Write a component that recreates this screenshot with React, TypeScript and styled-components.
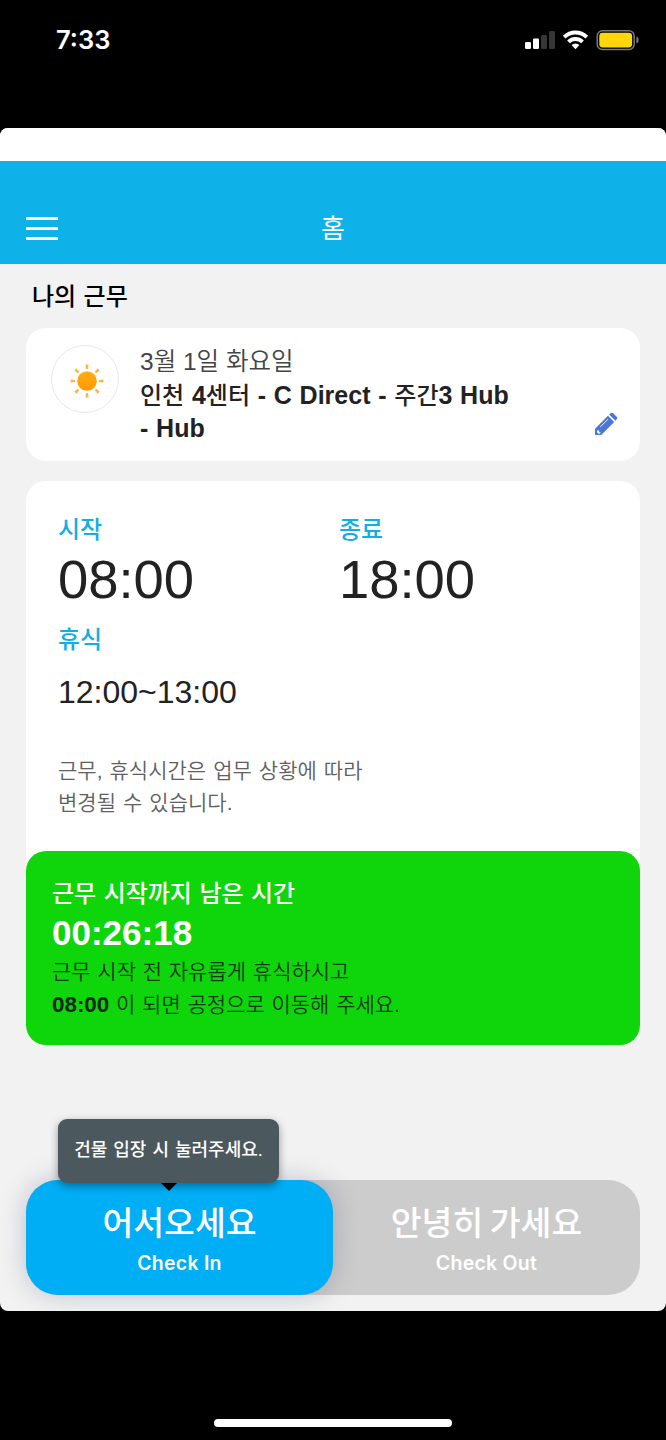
import React from 'react';
import styled, { createGlobalStyle } from 'styled-components';

const GlobalStyle = createGlobalStyle`
  * { box-sizing: border-box; }
  body { margin: 0; background: #000; }
`;

const Screen = styled.div`
  width: 666px;
  height: 1440px;
  background: #000;
  display: flex;
  flex-direction: column;
  font-family: 'Liberation Sans', 'Noto Sans CJK KR', sans-serif;
  color: #222;
  overflow: hidden;
  white-space: nowrap;
`;

const StatusBar = styled.div`
  height: 128px;
  flex: none;
  padding: 24px 27px 0 56px;
  display: flex;
  justify-content: space-between;
  align-items: flex-start;
`;

const Clock = styled.div`
  font: 600 25.5px/32px Inter, sans-serif;
  color: #fff;
`;

const StatusIcons = styled.svg`
  display: block;
`;

const Sheet = styled.main`
  height: 1183px;
  flex: none;
  background: #f2f2f2;
  border-radius: 8px;
  overflow: hidden;
  display: flex;
  flex-direction: column;
`;

const SheetTop = styled.div`
  height: 33px;
  flex: none;
  background: #fff;
`;

const Header = styled.header`
  height: 103px;
  flex: none;
  background: #0fb1e9;
  padding: 32px 26px 0;
  display: grid;
  grid-template-columns: 32px 1fr 32px;
  align-items: center;
`;

const MenuButton = styled.div`
  display: flex;
  flex-direction: column;
  gap: 7px;
  margin-top: -1px;
`;

const MenuBar = styled.span`
  height: 3px;
  background: #fff;
`;

const PageTitle = styled.h1`
  margin: 0;
  text-align: center;
  font-size: 26px;
  font-weight: 400;
  line-height: 36px;
  color: #fff;
`;

const SectionTitle = styled.h2`
  margin: 13px 0 15px 32px;
  font-size: 24px;
  font-weight: 500;
  line-height: 36px;
  color: #000;
  font-family: 'Noto Sans CJK KR', sans-serif;
  word-spacing: 2px;
`;

const ShiftCard = styled.section`
  height: 133px;
  margin: 0 26px;
  padding: 17px 22px 0 25px;
  background: #fff;
  border-radius: 20px;
  display: flex;
`;

const WeatherBadge = styled.div`
  width: 68px;
  height: 68px;
  border: 1.5px solid #e8e8e8;
  border-radius: 50%;
  display: flex;
  align-items: center;
  justify-content: center;
  padding: 3px 0 0 4px;
`;

const ShiftInfo = styled.div`
  flex: 1;
  margin-left: 21px;
  padding-top: 1px;
  line-height: 32.5px;
`;

const ShiftDate = styled.div`
  font-size: 24.5px;
  font-weight: 350;
  color: #444;
`;

const ShiftPlace = styled.div`
  font-size: 25px;
  font-weight: 700;
  word-spacing: 0.8px;
  color: #222;
`;

const Hangul = styled.span`
  font-size: 24px;
  font-weight: 500;
`;

const EditButton = styled.div`
  align-self: flex-end;
  margin-bottom: 25px;
  line-height: 0;
`;

const HoursCard = styled.section`
  height: 564px;
  margin: 20px 26px 0;
  background: #fff;
  border-radius: 20px;
  display: flex;
  flex-direction: column;
`;

const HoursBody = styled.div`
  height: 370px;
  padding: 31px 32px 0;
`;

const TimeGrid = styled.div`
  display: grid;
  grid-template-columns: 281px 1fr;
`;

const Label = styled.div`
  font-family: 'Noto Sans CJK KR', sans-serif;
  font-size: 24px;
  font-weight: 500;
  line-height: 32px;
  color: #12aee6;
`;

const BigTime = styled.div`
  font-size: 54.4px;
  line-height: 70px;
  margin: 1px 0 7px;
`;

const BreakTime = styled.div`
  font-size: 32px;
  line-height: 40px;
  margin-top: 18px;
`;

const Notice = styled.p`
  margin: 43px 0 0;
  font-size: 21px;
  font-weight: 350;
  line-height: 32px;
  word-spacing: 1.2px;
  color: #606060;
`;

const CountdownCard = styled.div`
  height: 194px;
  padding: 27px 26px 0;
  background: #0fd60b;
  border-radius: 20px;
`;

const CountdownTitle = styled.div`
  font-size: 24px;
  font-weight: 500;
  line-height: 32px;
  word-spacing: 0.8px;
  color: #fff;
`;

const Countdown = styled.div`
  font-size: 35px;
  font-weight: 700;
  line-height: 46px;
  color: #fff;
`;

const CountdownText = styled.p`
  margin: 0;
  font-size: 21px;
  font-weight: 350;
  line-height: 32.5px;
  word-spacing: 0.9px;
  color: #0b3a12;

  b { font-size: 22.4px; font-weight: 700; color: #0a260d; }
`;

const Actions = styled.div`
  position: relative;
  height: 115px;
  margin: 135px 26px 0;
  display: flex;
  background: #ccc;
  border-radius: 32px;
`;

const ActionButton = styled.div<{ $active?: boolean }>`
  flex: 1;
  padding-top: 19px;
  border-radius: 32px;
  text-align: center;
  color: #fff;
  background: ${(p) => (p.$active ? '#00aef6' : 'transparent')};
  box-shadow: ${(p) => (p.$active ? '0 0 26px rgba(60, 70, 110, 0.28)' : 'none')};
`;

const ActionTitle = styled.div`
  font-family: 'Noto Sans CJK KR', sans-serif;
  font-size: 33.5px;
  font-weight: 500;
  line-height: 44px;
  word-spacing: -1px;
`;

const ActionCaption = styled.div`
  font: 600 19.5px/28px Inter, sans-serif;
  letter-spacing: 0.25px;
  margin-top: 6px;
`;

const Tooltip = styled.div`
  position: absolute;
  left: 32px;
  top: -61px;
  width: 221px;
  height: 64px;
  border-radius: 9px;
  background: #4b595f;
  box-shadow: 0 3px 8px rgba(0, 0, 0, 0.38);
  color: #fff;
  font-size: 18px;
  font-weight: 500;
  line-height: 63px;
  word-spacing: 1px;
  text-align: center;

  &::after {
    content: '';
    position: absolute;
    left: 103px;
    top: 64px;
    border: 8px solid transparent;
    border-top-color: #000;
    border-bottom: 0;
  }
`;

const HomeIndicator = styled.div`
  width: 238px;
  height: 8px;
  margin: 108px auto 0;
  border-radius: 4px;
  background: #fff;
`;

function DeviceStatus() {
  return (
    <StatusIcons width="114" height="32" viewBox="0 0 114 32">
      <g fill="#fff">
        <rect x="0" y="18" width="6" height="7" rx="1.3" />
        <rect x="8" y="14.5" width="6" height="10.5" rx="1.3" />
      </g>
      <g fill="#363636">
        <rect x="16" y="11" width="6" height="14" rx="1.3" />
        <rect x="24" y="7" width="6" height="18" rx="1.3" />
      </g>
      <g fill="none" stroke="#fff" strokeWidth="3.9">
        <path d="M39.2 13.1a16.2 16.2 0 0 1 22.6 0" />
        <path d="M43.5 17.8a10 10 0 0 1 14 0" />
      </g>
      <path d="M50.5 25.2l-3.9-4.1a5.8 5.8 0 0 1 7.8 0z" fill="#fff" />
      <rect x="72.2" y="6.7" width="37" height="18.8" rx="5.3" fill="none" stroke="#77777a" strokeWidth="1.5" />
      <rect x="74.3" y="8.8" width="32.8" height="14.6" rx="3.4" fill="#ffd60a" />
      <path d="M111.3 12.6c1.7.5 2.4 1.8 2.4 3.5s-.7 3-2.4 3.5z" fill="#77777a" />
    </StatusIcons>
  );
}

function Sun() {
  return (
    <svg width="34" height="34" viewBox="-17 -17 34 34">
      <defs>
        <linearGradient id="sun" x1="0" y1="0" x2="0" y2="1">
          <stop offset="0" stopColor="#ffae17" />
          <stop offset="1" stopColor="#ff9800" />
        </linearGradient>
      </defs>
      <circle r="9.8" fill="url(#sun)" />
      {[0, 45, 90, 135, 180, 225, 270, 315].map((a) => (
        <path key={a} d="M-1.5-16.4h3L1-12H-1z" fill="#ffb545" transform={`rotate(${a})`} />
      ))}
    </svg>
  );
}

function Pencil() {
  return (
    <svg width="24" height="24" viewBox="0 0 24 24">
      <g fill="#4a75d9">
        <path d="M1 23V16.8L14 3.8l6.2 6.2L7.2 23z" />
        <path d="M15.2 2.6l1.4-1.4c.7-.7 1.8-.7 2.5 0l3.6 3.6c.7.7.7 1.8 0 2.5l-1.4 1.4z" />
      </g>
      <path d="M6.4 14.8L14 7.2" stroke="#fff" strokeWidth="0.9" />
      <path d="M3.2 18.2l1.8.3.3 1.8 1.6.3-1.2 1.1-1.8-.3-.8-1.2z" fill="#fff" />
    </svg>
  );
}

export default function App() {
  return (
    <Screen>
      <GlobalStyle />
      <StatusBar>
        <Clock>7:33</Clock>
        <DeviceStatus />
      </StatusBar>
      <Sheet>
        <SheetTop />
        <Header>
          <MenuButton>
            <MenuBar />
            <MenuBar />
            <MenuBar />
          </MenuButton>
          <PageTitle>홈</PageTitle>
        </Header>
        <SectionTitle>나의 근무</SectionTitle>
        <ShiftCard>
          <WeatherBadge>
            <Sun />
          </WeatherBadge>
          <ShiftInfo>
            <ShiftDate>3월 1일 화요일</ShiftDate>
            <ShiftPlace>
              <Hangul>인천</Hangul> 4<Hangul>센터</Hangul> - C Direct - <Hangul>주간</Hangul>3 Hub
              <br />- Hub
            </ShiftPlace>
          </ShiftInfo>
          <EditButton>
            <Pencil />
          </EditButton>
        </ShiftCard>
        <HoursCard>
          <HoursBody>
            <TimeGrid>
              <div>
                <Label>시작</Label>
                <BigTime>08:00</BigTime>
              </div>
              <div>
                <Label>종료</Label>
                <BigTime>18:00</BigTime>
              </div>
            </TimeGrid>
            <Label>휴식</Label>
            <BreakTime>12:00~13:00</BreakTime>
            <Notice>
              근무, 휴식시간은 업무 상황에 따라
              <br />
              변경될 수 있습니다.
            </Notice>
          </HoursBody>
          <CountdownCard>
            <CountdownTitle>근무 시작까지 남은 시간</CountdownTitle>
            <Countdown>00:26:18</Countdown>
            <CountdownText>
              근무 시작 전 자유롭게 휴식하시고
              <br />
              <b>08:00</b> 이 되면 공정으로 이동해 주세요.
            </CountdownText>
          </CountdownCard>
        </HoursCard>
        <Actions>
          <ActionButton $active>
            <ActionTitle>어서오세요</ActionTitle>
            <ActionCaption>Check In</ActionCaption>
          </ActionButton>
          <ActionButton>
            <ActionTitle>안녕히 가세요</ActionTitle>
            <ActionCaption>Check Out</ActionCaption>
          </ActionButton>
          <Tooltip>건물 입장 시 눌러주세요.</Tooltip>
        </Actions>
      </Sheet>
      <HomeIndicator />
    </Screen>
  );
}
